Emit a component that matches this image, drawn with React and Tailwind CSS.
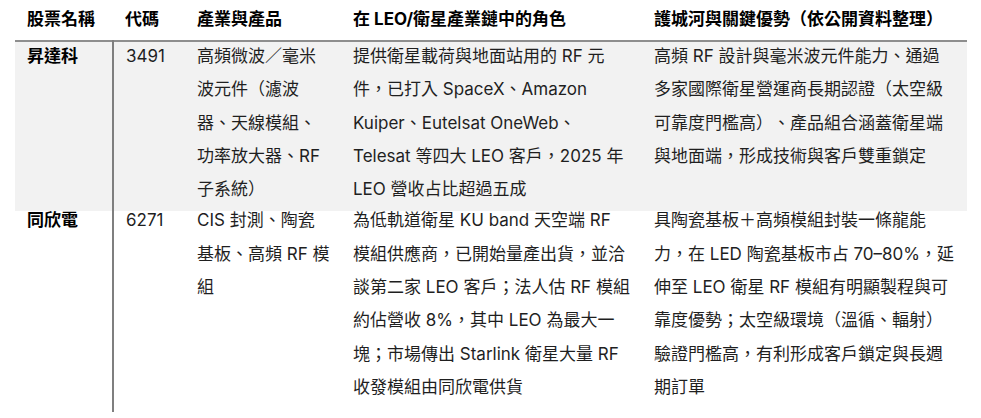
const rows = [
  {
    name: "昇達科",
    code: "3491",
    product: "高頻微波／毫米波元件（濾波器、天線模組、功率放大器、RF 子系統）",
    role: "提供衛星載荷與地面站用的 RF 元件，已打入 SpaceX、Amazon Kuiper、Eutelsat OneWeb、Telesat 等四大 LEO 客戶，2025 年 LEO 營收占比超過五成",
    moat: "高頻 RF 設計與毫米波元件能力、通過多家國際衛星營運商長期認證（太空級可靠度門檻高）、產品組合涵蓋衛星端與地面端，形成技術與客戶雙重鎖定",
    shaded: true,
  },
  {
    name: "同欣電",
    code: "6271",
    product: "CIS 封測、陶瓷基板、高頻 RF 模組",
    role: "為低軌道衛星 KU band 天空端 RF 模組供應商，已開始量產出貨，並洽談第二家 LEO 客戶；法人估 RF 模組約佔營收 8%，其中 LEO 為最大一塊；市場傳出 Starlink 衛星大量 RF 收發模組由同欣電供貨",
    moat: "具陶瓷基板＋高頻模組封裝一條龍能力，在 LED 陶瓷基板市占 70–80%，延伸至 LEO 衛星 RF 模組有明顯製程與可靠度優勢；太空級環境（溫循、輻射）驗證門檻高，有利形成客戶鎖定與長週期訂單",
    shaded: false,
  },
];

const Cell = ({ shaded, className = "pr-[10px]", children }) => (
  <td className={"pl-3 " + (shaded ? "pb-[5px] " : "pb-2 ") + className}>
    <div className={shaded ? "-mt-[2px]" : "-mt-[7px]"}>{children}</div>
  </td>
);

export default function App() {
  return (
    <div className="w-[981px] h-[418px] bg-white overflow-hidden font-['Inter','Noto_Sans_CJK_TC',sans-serif] text-[#1f1f1f] [text-spacing-trim:space-all]">
      <table className="ml-[15px] w-[952px] table-fixed border-collapse text-[17px] leading-[33.3px]">
        <colgroup>
          <col className="w-[98px]" />
          <col className="w-[72px]" />
          <col className="w-[156px]" />
          <col className="w-[301px]" />
          <col className="w-[325px]" />
        </colgroup>
        <thead>
          <tr className="h-[41px] border-b-2 border-[#8e8e8e] text-left text-black">
            <th className="pl-3 pr-[10px] font-bold">股票名稱</th>
            <th className="pl-3 pr-[10px] font-bold">代碼</th>
            <th className="pl-3 pr-[10px] font-bold">產業與產品</th>
            <th className="pl-3 pr-[10px] font-bold">在 LEO/衛星產業鏈中的角色</th>
            <th className="pl-3 pr-[10px] font-bold whitespace-nowrap">護城河與關鍵優勢（依公開資料整理）</th>
          </tr>
        </thead>
        <tbody>
          {rows.map((r) => (
            <tr key={r.code} className={r.shaded ? "bg-[#f2f2f2] align-top" : "align-top"}>
              <Cell shaded={r.shaded} className="pr-[10px] font-bold text-black border-r-2 border-[#7f7f7f]">{r.name}</Cell>
              <Cell shaded={r.shaded}>{r.code}</Cell>
              <Cell shaded={r.shaded}>{r.product}</Cell>
              <Cell shaded={r.shaded}>{r.role}</Cell>
              <Cell shaded={r.shaded} className="pr-[12px]">{r.moat}</Cell>
            </tr>
          ))}
        </tbody>
      </table>
    </div>
  );
}
